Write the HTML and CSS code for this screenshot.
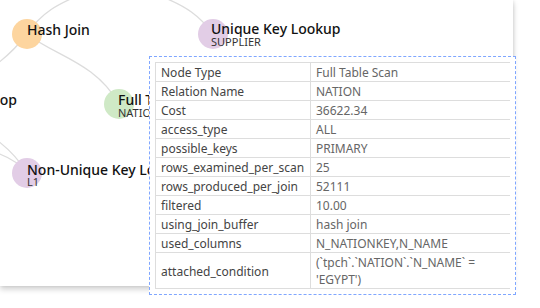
FILE: index.html
```html
<!DOCTYPE html>
<html lang="en">
<head>
  <meta charset="UTF-8">
  <meta name="viewport" content="width=device-width, initial-scale=1.0">
  <title>Query Plan</title>
  <link rel="stylesheet" href="styles.css">
</head>
<body>
  <div class="page">
    <div class="plan-card">
      <svg class="plan-graph" width="513" height="286" viewBox="0 0 513 286">
        <g class="links">
          <path d="M27,34 C42,12 58,4 82,-6"/>
          <path d="M27,34 C16,48 8,56 -6,66"/>
          <path d="M27,34 C55,56 95,62 119,104"/>
          <path d="M213,34 C200,16 186,6 160,-4"/>
          <path d="M27,173 C18,158 8,148 -6,138"/>
          <path d="M27,173 C20,164 10,157 -6,152"/>
        </g>
        <g class="node">
          <circle cx="27" cy="34" r="15" fill="#fdd59f"/>
          <text x="27" y="35" class="label">Hash Join</text>
        </g>
        <g class="node">
          <circle cx="213" cy="34" r="15" fill="#e2cde6"/>
          <text x="211" y="34" class="label">Unique Key Lookup</text>
          <text x="211" y="46" class="sub">SUPPLIER</text>
        </g>
        <g class="node">
          <text x="17" y="105" class="label" text-anchor="end">Nested Loop</text>
        </g>
        <g class="node">
          <circle cx="119" cy="104" r="15" fill="#cfe9c6"/>
          <text x="118" y="105" class="label">Full Table Scan</text>
          <text x="118" y="117" class="sub">NATION</text>
        </g>
        <g class="node">
          <circle cx="27" cy="173" r="15" fill="#e2cde6"/>
          <text x="27" y="175" class="label">Non-Unique Key Lookup</text>
          <text x="27" y="186" class="sub">L1</text>
        </g>
      </svg>
    </div>

    <div class="node-tooltip">
      <table class="detail-table">
        <tr><td class="key">Node Type</td><td class="val">Full Table Scan</td></tr>
        <tr><td class="key">Relation Name</td><td class="val">NATION</td></tr>
        <tr><td class="key">Cost</td><td class="val">36622.34</td></tr>
        <tr><td class="key">access_type</td><td class="val">ALL</td></tr>
        <tr><td class="key">possible_keys</td><td class="val">PRIMARY</td></tr>
        <tr><td class="key">rows_examined_per_scan</td><td class="val">25</td></tr>
        <tr><td class="key">rows_produced_per_join</td><td class="val">52111</td></tr>
        <tr><td class="key">filtered</td><td class="val">10.00</td></tr>
        <tr><td class="key">using_join_buffer</td><td class="val">hash join</td></tr>
        <tr><td class="key">used_columns</td><td class="val">N_NATIONKEY,N_NAME</td></tr>
        <tr><td class="key">attached_condition</td><td class="val">(`tpch`.`NATION`.`N_NAME` = 'EGYPT')</td></tr>
      </table>
    </div>
  </div>
</body>
</html>
```

FILE: styles.css
```css
body {
  margin: 0;
  background-color: white;
  font-family: 'Noto Sans', 'Open Sans', sans-serif;
}

.page {
  position: relative;
  width: 540px;
  height: 308px;
  overflow: hidden;
}

.plan-card {
  width: 513px;
  height: 286px;
  background-color: white;
  overflow: hidden;
  box-shadow: 0 3px 6px rgba(0, 0, 0, 0.2), 1px 0 3px rgba(0, 0, 0, 0.06);
}

.plan-graph {
  display: block;
}

.links path {
  fill: none;
  stroke: #dcdcdc;
  stroke-width: 1.3;
}

.label {
  font-size: 14px;
  font-weight: 500;
  fill: #111;
}

.sub {
  font-size: 11px;
  fill: #333;
}

.node-tooltip {
  position: absolute;
  left: 149px;
  top: 56px;
  width: 355px;
  padding: 5px;
  background-color: white;
  border: 1px dashed #7fa6ff;
}

.detail-table {
  width: 355px;
  border-collapse: collapse;
  font-size: 12px;
  line-height: 17px;
  table-layout: fixed;
}

.detail-table td {
  padding: 1px 5px 0;
  border-top: 1px solid #dddddd;
  border-bottom: 1px solid #dddddd;
  vertical-align: middle;
  word-break: break-word;
}

.detail-table .key {
  width: 144px;
  color: #444;
  border-left: 1px solid #dddddd;
  border-right: 1px solid #dddddd;
}

.detail-table .val {
  color: #666;
}
```
